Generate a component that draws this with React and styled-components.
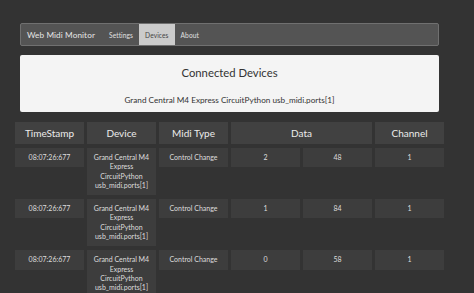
import React from "react";
import styled, { createGlobalStyle } from "styled-components";

const GlobalStyle = createGlobalStyle`
    html, body {
        margin: 0;
        padding: 0;
        background: #333333;
        font-family: "Lato", "Open Sans", sans-serif;
        overflow: hidden;
    }
`

const Page = styled.div`
    width: 429px;
    padding: 23px 0 0 15px;
`

const Navbar = styled.nav`
    display: flex;
    align-items: stretch;
    height: 21px;
    margin: 0 5px;
    background: #545454;
    border: 1px solid #707070;
    border-radius: 2px;
`

const Brand = styled.div`
    display: flex;
    align-items: center;
    padding: 0 8px 0 6px;
    font-size: 8.2px;
    letter-spacing: 0.1px;
    color: #e6e6e6;
`

const NavLink = styled.div`
    display: flex;
    align-items: center;
    padding: 0 6px;
    font-size: 6.6px;
    letter-spacing: 0.1px;
    color: ${props => props.active ? "#444" : "#e0e0e0"};
    background: ${props => props.active ? "#cbcbcb" : "transparent"};
`

const Card = styled.div`
    display: flex;
    flex-direction: column;
    align-items: center;
    height: 57px;
    margin: 9px 5px 0;
    background: #f4f4f4;
    border-radius: 2px;
    color: #333;
`

const CardTitle = styled.div`
    margin-top: 11px;
    font-size: 11.3px;
`

const CardLine = styled.div`
    margin-top: 16px;
    font-size: 8.2px;
`

const Table = styled.div`
    display: grid;
    grid-template-columns: repeat(6, 69px);
    column-gap: 3px;
    row-gap: 4px;
    align-items: start;
    margin-top: 10px;
`

const HeadCell = styled.div`
    grid-column: span ${props => props.span || 1};
    height: 22px;
    display: flex;
    align-items: center;
    justify-content: center;
    background: #414141;
    color: #ececec;
    font-size: 10px;
`

const Cell = styled.div`
    padding: 5px 4px;
    background: #3d3d3d;
    color: #dddddd;
    font-size: 7px;
    line-height: 9.3px;
    text-align: center;
`

const rows = [
    { time: "08:07:26:677", type: "Control Change", a: 2, b: 48, ch: 1 },
    { time: "08:07:26:677", type: "Control Change", a: 1, b: 84, ch: 1 },
    { time: "08:07:26:677", type: "Control Change", a: 0, b: 58, ch: 1 },
];

const App = () => {
    return (
        <Page>
            <GlobalStyle />
            <Navbar>
                <Brand>Web Midi Monitor</Brand>
                <NavLink>Settings</NavLink>
                <NavLink active>Devices</NavLink>
                <NavLink>About</NavLink>
            </Navbar>
            <Card>
                <CardTitle>Connected Devices</CardTitle>
                <CardLine>Grand Central M4 Express CircuitPython usb_midi.ports[1]</CardLine>
            </Card>
            <Table>
                <HeadCell>TimeStamp</HeadCell>
                <HeadCell>Device</HeadCell>
                <HeadCell>Midi Type</HeadCell>
                <HeadCell span={2}>Data</HeadCell>
                <HeadCell>Channel</HeadCell>
                {rows.map((r, i) => (
                    <React.Fragment key={i}>
                        <Cell>{r.time}</Cell>
                        <Cell>Grand Central M4<br />Express<br />CircuitPython<br />usb_midi.ports[1]</Cell>
                        <Cell>{r.type}</Cell>
                        <Cell>{r.a}</Cell>
                        <Cell>{r.b}</Cell>
                        <Cell>{r.ch}</Cell>
                    </React.Fragment>
                ))}
            </Table>
        </Page>
    )
}

export default App;
